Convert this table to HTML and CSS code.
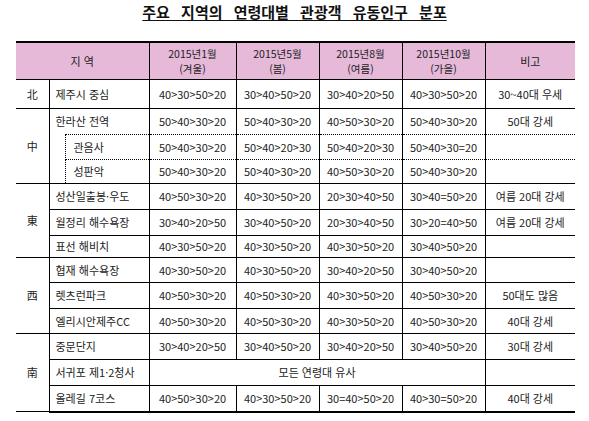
FILE: index.html
```html
<!DOCTYPE html>
<html lang="ko">
<head>
<meta charset="utf-8">
<title>주요 지역의 연령대별 관광객 유동인구 분포</title>
<link rel="stylesheet" href="styles.css">
</head>
<body>
<div class="page">
  <h1 class="title"><span>주요 지역의 연령대별 관광객 유동인구 분포</span></h1>
  <table class="grid">
    <colgroup>
      <col class="c-region"><col class="c-indent"><col class="c-name">
      <col class="c-d1"><col class="c-d2"><col class="c-d3"><col class="c-d4"><col class="c-note">
    </colgroup>
    <thead>
      <tr class="head">
        <th colspan="3">지 역</th>
        <th><span class="hl">2015년1월</span><span class="hl">(겨울)</span></th>
        <th><span class="hl">2015년5월</span><span class="hl">(봄)</span></th>
        <th><span class="hl">2015년8월</span><span class="hl">(여름)</span></th>
        <th><span class="hl">2015년10월</span><span class="hl">(가을)</span></th>
        <th>비고</th>
      </tr>
    </thead>
    <tbody>
      <tr class="row-tall">
        <td class="region">北</td>
        <td class="name" colspan="2">제주시 중심</td>
        <td>40&gt;30&gt;50&gt;20</td><td>30&gt;40&gt;50&gt;20</td><td>30&gt;40&gt;20&gt;50</td><td>40&gt;30&gt;50&gt;20</td>
        <td>30~40대 우세</td>
      </tr>

      <tr class="dot-below">
        <td class="region" rowspan="3">中</td>
        <td class="name" colspan="2">한라산 전역</td>
        <td>50&gt;40&gt;30&gt;20</td><td>50&gt;40&gt;30&gt;20</td><td>40&gt;50&gt;30&gt;20</td><td>50&gt;40&gt;30&gt;20</td>
        <td>50대 강세</td>
      </tr>
      <tr class="dot-above dot-below row-25">
        <td class="indent" rowspan="2"></td>
        <td class="name sub">관음사</td>
        <td>50&gt;40&gt;30&gt;20</td><td>50&gt;40&gt;20&gt;30</td><td>50&gt;40&gt;20&gt;30</td><td>50&gt;40&gt;30=20</td>
        <td></td>
      </tr>
      <tr class="dot-above row-24">
        <td class="name sub">성판악</td>
        <td>50&gt;40&gt;30&gt;20</td><td>50&gt;40&gt;30&gt;20</td><td>40&gt;50&gt;30&gt;20</td><td>50&gt;40&gt;30&gt;20</td>
        <td></td>
      </tr>

      <tr>
        <td class="region" rowspan="3">東</td>
        <td class="name" colspan="2">성산일출봉·우도</td>
        <td>40&gt;50&gt;30&gt;20</td><td>40&gt;30&gt;50&gt;20</td><td>20&gt;30&gt;40&gt;50</td><td>30&gt;40=50&gt;20</td>
        <td>여름 20대 강세</td>
      </tr>
      <tr>
        <td class="name" colspan="2">월정리 해수욕장</td>
        <td>30&gt;40&gt;20&gt;50</td><td>30&gt;40&gt;50&gt;20</td><td>20&gt;30&gt;40&gt;50</td><td>30&gt;20=40&gt;50</td>
        <td>여름 20대 강세</td>
      </tr>
      <tr class="row-22">
        <td class="name" colspan="2">표선 해비치</td>
        <td>40&gt;30&gt;50&gt;20</td><td>40&gt;30&gt;50&gt;20</td><td>40&gt;30&gt;50&gt;20</td><td>30&gt;40&gt;50&gt;20</td>
        <td></td>
      </tr>

      <tr class="row-25">
        <td class="region" rowspan="3">西</td>
        <td class="name" colspan="2">협재 해수욕장</td>
        <td>40&gt;30&gt;50&gt;20</td><td>40&gt;30&gt;50&gt;20</td><td>30&gt;40&gt;20&gt;50</td><td>30&gt;40&gt;50&gt;20</td>
        <td></td>
      </tr>
      <tr>
        <td class="name" colspan="2">렛츠런파크</td>
        <td>40&gt;50&gt;30&gt;20</td><td>40&gt;50&gt;30&gt;20</td><td>40&gt;30&gt;50&gt;20</td><td>40&gt;50&gt;30&gt;20</td>
        <td>50대도 많음</td>
      </tr>
      <tr class="row-25">
        <td class="name" colspan="2">엘리시안제주CC</td>
        <td>40&gt;50&gt;30&gt;20</td><td>40&gt;50&gt;30&gt;20</td><td>40&gt;30&gt;50&gt;20</td><td>40&gt;50&gt;30&gt;20</td>
        <td>40대 강세</td>
      </tr>

      <tr>
        <td class="region" rowspan="3">南</td>
        <td class="name" colspan="2">중문단지</td>
        <td>30&gt;40&gt;20&gt;50</td><td>30&gt;40&gt;50&gt;20</td><td>30&gt;40&gt;20&gt;50</td><td>30&gt;40&gt;50&gt;20</td>
        <td>30대 강세</td>
      </tr>
      <tr>
        <td class="name" colspan="2">서귀포 제1·2청사</td>
        <td colspan="4">모든 연령대 유사</td>
        <td></td>
      </tr>
      <tr class="last">
        <td class="name" colspan="2">올레길 7코스</td>
        <td>40&gt;50&gt;30&gt;20</td><td>40&gt;30&gt;50&gt;20</td><td>30=40&gt;50&gt;20</td><td>40&gt;30=50&gt;20</td>
        <td>40대 강세</td>
      </tr>
    </tbody>
  </table>
</div>
</body>
</html>
```

FILE: styles.css
```css
html, body {
  margin: 0;
  padding: 0;
  background: #ffffff;
}

.page {
  width: 589px;
  height: 421px;
  overflow: hidden;
  font-family: "Noto Sans CJK KR", "Noto Sans", sans-serif;
  color: #222;
}

.title {
  margin: 0;
  padding-top: 3px;
  height: 41px;
  box-sizing: border-box;
  text-align: center;
  font-size: 15px;
  line-height: 18px;
  font-weight: bold;
  color: #111;
  word-spacing: 7px;
}

.title span {
  text-decoration: underline;
  text-decoration-thickness: 1px;
  text-underline-offset: 2px;
}

.grid {
  margin-left: 16px;
  width: 559px;
  table-layout: fixed;
  border-collapse: collapse;
  border-left: hidden;
  border-right: hidden;
  font-size: 11px;
  line-height: 13px;
}

.c-region { width: 33px; }
.c-indent { width: 16px; }
.c-name { width: 84px; }
.c-d1 { width: 87px; }
.c-d2 { width: 83px; }
.c-d3 { width: 83px; }
.c-d4 { width: 83px; }
.c-note { width: 90px; }

.grid th,
.grid td {
  border: 1px solid #000;
  padding: 0;
  text-align: center;
  vertical-align: middle;
  white-space: nowrap;
  font-weight: normal;
}

.head th {
  background: #e6b9d9;
  border-top: 2px solid #000;
  height: 36px;
  color: #222;
}

.head .hl {
  display: block;
  font-size: 10.5px;
  line-height: 15.5px;
}

.grid tr { height: 26px; }
.grid tr.row-tall { height: 29px; }
.grid tr.row-25 { height: 25px; }
.grid tr.row-24 { height: 24px; }
.grid tr.row-22 { height: 22px; }

.grid td.name {
  text-align: left;
  padding-left: 6px;
}

.grid td.name.sub {
  padding-left: 8px;
}

.grid tr.dot-below > td { border-bottom-style: dotted; }
.grid tr.dot-above > td { border-top-style: dotted; }

.grid td.sub { border-left: 1px dotted #000; }

.grid tr > td.indent {
  border-top: hidden;
  border-right: 1px dotted #000;
  border-bottom: 1px solid #000;
}

.grid tr.last > td { border-bottom: 2px solid #000; }
```
